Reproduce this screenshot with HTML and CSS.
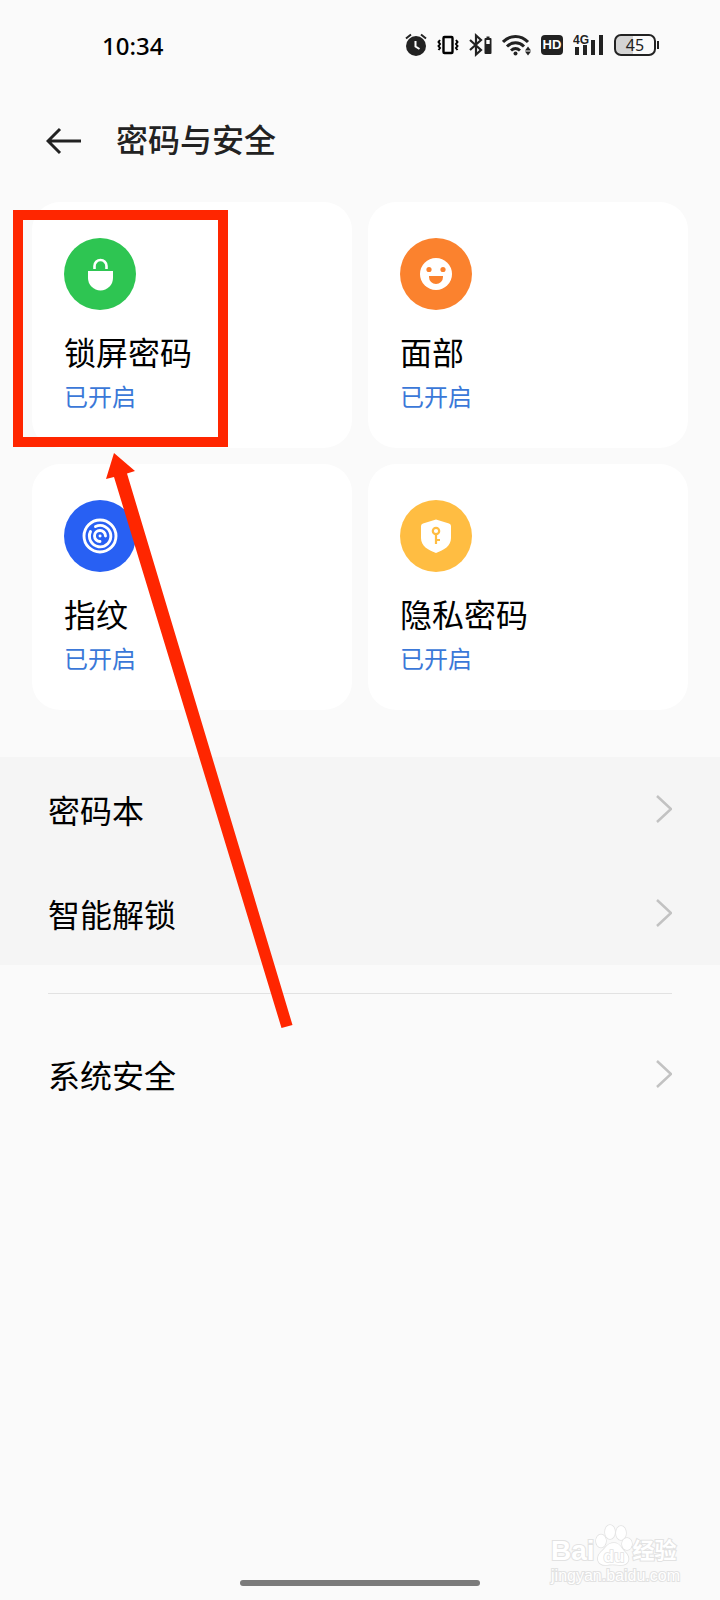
FILE: index.html
```
<!DOCTYPE html>
<html lang="zh-CN">
<head>
  <meta charset="utf-8">
  <meta name="viewport" content="width=device-width, initial-scale=1">
  <title>密码与安全</title>
  <link rel="stylesheet" href="styles.css">
</head>
<body>
  <div class="status-bar">
    <span class="time">10:34</span>
    <div class="status-icons">
      <!-- alarm -->
      <svg width="22" height="24" viewBox="0 0 22 24">
        <circle cx="11" cy="13" r="10" fill="#222"/>
        <path d="M1 5.500L6 1.500M21 5.500L16 1.500" stroke="#222" stroke-width="2" fill="none"/>
        <path d="M10.500 8v5.500l4 2.500" stroke="#fff" stroke-width="2" fill="none"/>
      </svg>
      <!-- vibrate -->
      <svg width="22" height="24" viewBox="0 0 22 24" fill="none" stroke="#000">
        <rect x="6.500" y="4" width="9" height="16" rx="1" stroke-width="2.400"/>
        <path d="M3 7l-1.500 2L3 11l-1.500 2L3 15l-1.500 2M19 7l1.500 2-1.500 2 1.500 2-1.500 2 1.500 2" stroke-width="2"/>
      </svg>
      <!-- bluetooth -->
      <svg width="23" height="24" viewBox="0 0 23 24">
        <path d="M1 7l11 10-5 4.500V2.500l5 4.500L1 17" fill="none" stroke="#222" stroke-width="2.200"/>
        <rect x="15.500" y="5" width="7" height="16" rx="1" fill="#222"/>
        <path d="M17.500 3.500h3v2h-3z" fill="#222"/>
        <path d="M17.300 7h3.400v4h-3.400z" fill="#fff"/>
      </svg>
      <!-- wifi -->
      <svg width="29" height="24" viewBox="0 0 29 24" fill="none" stroke="#222" stroke-width="3">
        <path d="M1 9C8 1.500 19 1.500 26 9M5 13.500c5-5 12-5 17 0M9 17.500c3-2.700 6-2.700 9 0"/>
        <circle cx="13.500" cy="20.500" r="2" fill="#222" stroke="none"/>
        <path d="M26 13.500l3 4h-6zM26 22.500l3-4h-6z" fill="#222" stroke="none"/>
      </svg>
      <span class="hd">HD</span>
      <!-- mobile signal -->
      <svg width="31" height="24" viewBox="0 0 31 24">
        <path d="M2 14h4v8H2zM10 12h4v10h-4zM18 7h4v15h-4zM26 2h4v20h-4z" fill="#222"/>
        <text x="0" y="11" class="network">4G</text>
      </svg>
      <span class="battery">45</span>
    </div>
  </div>

  <header class="header">
    <button class="back" type="button" aria-label="返回">
      <svg width="36" height="28" viewBox="0 0 36 28" fill="none" stroke="#222" stroke-width="3">
        <path d="M35 14H2M14 2L2 14l12 12"/>
      </svg>
    </button>
    <h1>密码与安全</h1>
  </header>

  <main>
    <div class="cards">
      <button class="card" type="button">
        <svg class="card-icon" viewBox="0 0 72 72">
          <circle cx="36" cy="36" r="36" fill="#2ec552"/>
          <path d="M30.500 31v-3a6 6 0 0 1 12 0v3" fill="none" stroke="#fff" stroke-width="2.600"/>
          <path d="M24 33h25v7a12.500 12.500 0 0 1-25 0z" fill="#fff"/>
        </svg>
        <span class="card-title">锁屏密码</span>
        <span class="card-state">已开启</span>
      </button>
      <button class="card" type="button">
        <svg class="card-icon" viewBox="0 0 72 72">
          <circle cx="36" cy="36" r="36" fill="#fb822e"/>
          <circle cx="36" cy="36" r="16" fill="#fff"/>
          <circle cx="29" cy="31.500" r="2.600" fill="#fb822e"/>
          <circle cx="43" cy="31.500" r="2.600" fill="#fb822e"/>
          <path d="M29 38h14v1a7 7 0 0 1-14 0z" fill="#fb822e"/>
        </svg>
        <span class="card-title">面部</span>
        <span class="card-state">已开启</span>
      </button>
      <button class="card" type="button">
        <svg class="card-icon" viewBox="0 0 72 72">
          <circle cx="36" cy="36" r="36" fill="#2860f3"/>
          <g fill="none" stroke="#fff" stroke-width="2.900" stroke-linecap="round">
            <circle cx="36" cy="36" r="16"/>
            <path d="M31.500 26.500A10.700 10.700 0 1 1 26.500 31.500"/>
            <path d="M36 41.500A5.500 5.500 0 1 1 41.500 36"/>
            <path d="M36 36h.1"/>
          </g>
        </svg>
        <span class="card-title">指纹</span>
        <span class="card-state">已开启</span>
      </button>
      <button class="card" type="button">
        <svg class="card-icon" viewBox="0 0 72 72">
          <circle cx="36" cy="36" r="36" fill="#ffbd42"/>
          <path d="M36 19.500l13 4q2 .6 2 2.500v12c0 8-7 12-15 15-8-3-15-7-15-15V26q0-1.900 2-2.500z" fill="#fff"/>
          <g fill="none" stroke="#ffbd42" stroke-width="2.200">
            <circle cx="36" cy="31" r="3.200"/>
            <path d="M36 34v10M36 40h4"/>
          </g>
        </svg>
        <span class="card-title">隐私密码</span>
        <span class="card-state">已开启</span>
      </button>
    </div>

    <nav>
      <div class="group pressed">
        <a class="row" href="#">密码本
          <svg class="chevron" viewBox="0 0 16 28"><path d="M1 1l14 13L1 27"/></svg>
        </a>
        <a class="row" href="#">智能解锁
          <svg class="chevron" viewBox="0 0 16 28"><path d="M1 1l14 13L1 27"/></svg>
        </a>
      </div>
      <hr>
      <div class="group">
        <a class="row" href="#">系统安全
          <svg class="chevron" viewBox="0 0 16 28"><path d="M1 1l14 13L1 27"/></svg>
        </a>
      </div>
    </nav>
  </main>

  <footer>
    <div class="watermark">
      <div class="brand">
        <span>Bai</span>
        <svg width="38" height="42" viewBox="0 0 38 42" fill="#fff" stroke="#e2e2e2" stroke-width="1.500">
          <ellipse cx="6" cy="17" rx="5" ry="6.500"/>
          <ellipse cx="15" cy="8" rx="5" ry="7"/>
          <ellipse cx="26" cy="9" rx="5" ry="7"/>
          <ellipse cx="32" cy="20" rx="5" ry="6"/>
          <path d="M19 19c6 0 7 5 11 9 6 6 4 13-4 13-4 0-9-1-14 0-9 1-12-7-6-13 5-4 6-9 13-9z"/>
          <text x="19" y="38" class="du">du</text>
        </svg>
        <span class="cn">经验</span>
      </div>
      <span class="site">jingyan.baidu.com</span>
    </div>
    <div class="home-bar"></div>
  </footer>

  <!-- highlight drawn over the page -->
  <div class="mark-box"></div>
  <svg class="mark-arrow" width="190" height="576" viewBox="0 0 190 576">
    <path d="M10 0L31 18L23 20.500L188.500 572L177.500 575L10 24L2 26z" fill="#ff2600"/>
  </svg>
</body>
</html>
```

FILE: styles.css
```
* {
  box-sizing: border-box;
}

body {
  position: relative;
  display: flex;
  flex-direction: column;
  min-height: 100vh;
  margin: 0;
  background-color: #fafafa;
  color: #000;
  font-family: "Noto Sans CJK SC", sans-serif;
}

svg {
  display: block;
  flex-shrink: 0;
}

.status-bar {
  display: flex;
  align-items: center;
  justify-content: space-between;
  height: 90px;
  padding: 0 60px 0 102px;
}

.time {
  font-family: "Noto Sans", sans-serif;
  font-size: 24px;
  font-weight: 500;
}

.status-icons {
  display: flex;
  align-items: center;
  gap: 10px;
}

.hd {
  width: 22px;
  height: 20px;
  border-radius: 4px;
  background-color: #222;
  color: #fff;
  font: bold 13px/20px "Liberation Sans", sans-serif;
  text-align: center;
}

.network {
  fill: #222;
  stroke: #fafafa;
  stroke-width: 2px;
  paint-order: stroke;
  font: bold 12px "Liberation Sans", sans-serif;
}

.battery {
  position: relative;
  width: 42px;
  height: 22px;
  margin-right: 4px;
  border: 2px solid #222;
  border-radius: 7px;
  background: linear-gradient(to right, #d4d4d4 45%, #fafafa 45%);
  color: #222;
  font: 16px/18px "Noto Sans", sans-serif;
  text-align: center;
}

.battery::after {
  content: "";
  position: absolute;
  top: 5px;
  right: -5px;
  width: 2px;
  height: 8px;
  background-color: #222;
}

.header {
  display: flex;
  align-items: center;
  gap: 34px;
  height: 102px;
  padding: 0 46px;
}

.back {
  padding: 0;
  border: none;
  background: none;
  cursor: pointer;
}

h1 {
  margin: 0;
  padding-bottom: 6px;
  color: #222;
  font-size: 32px;
  font-weight: 500;
  line-height: 46px;
}

.cards {
  display: grid;
  grid-template-columns: 1fr 1fr;
  gap: 16px;
  padding: 10px 32px 47px;
}

.card {
  display: flex;
  flex-direction: column;
  align-items: flex-start;
  padding: 36px 32px 32px;
  border: none;
  border-radius: 28px;
  background-color: #fff;
  color: #000;
  font-family: inherit;
  text-align: left;
  cursor: pointer;
}

.card-icon {
  width: 72px;
  height: 72px;
  margin-bottom: 18px;
}

.card-title {
  margin-bottom: 2px;
  font-size: 32px;
  line-height: 46px;
}

.card-state {
  color: #3b78d8;
  font-size: 24px;
  line-height: 40px;
}

.pressed {
  background-color: #f5f5f5;
}

.row {
  display: flex;
  align-items: center;
  justify-content: space-between;
  height: 104px;
  padding: 0 48px;
  color: #000;
  font-size: 32px;
  text-decoration: none;
}

.chevron {
  width: 16px;
  height: 28px;
  fill: none;
  stroke: #c2c2c2;
  stroke-width: 2.5px;
}

hr {
  height: 1px;
  margin: 28px 48px;
  border: none;
  background-color: #e2e2e2;
}

footer {
  display: flex;
  flex-direction: column;
  margin-top: auto;
  padding-bottom: 14px;
}

.watermark {
  align-self: flex-end;
  margin: 0 40px -6px 0;
  color: #fff;
  font-family: "Liberation Sans", "Noto Sans CJK SC", sans-serif;
  -webkit-text-stroke: 2px #e2e2e2;
  paint-order: stroke;
}

.brand {
  display: flex;
  align-items: flex-end;
  font-size: 28px;
  font-weight: bold;
  line-height: 30px;
}

.du {
  fill: #fff;
  font-size: 17px;
  text-anchor: middle;
}

.cn {
  font-size: 22px;
}

.site {
  display: block;
  font-size: 16px;
  line-height: 20px;
}

.home-bar {
  align-self: center;
  width: 240px;
  height: 6px;
  border-radius: 3px;
  background-color: #7b7b7b;
}

.mark-box {
  position: absolute;
  top: 210px;
  left: 13px;
  width: 215px;
  height: 237px;
  border: 10px solid #ff2600;
  pointer-events: none;
}

.mark-arrow {
  position: absolute;
  top: 453px;
  left: 104px;
  pointer-events: none;
}
```
